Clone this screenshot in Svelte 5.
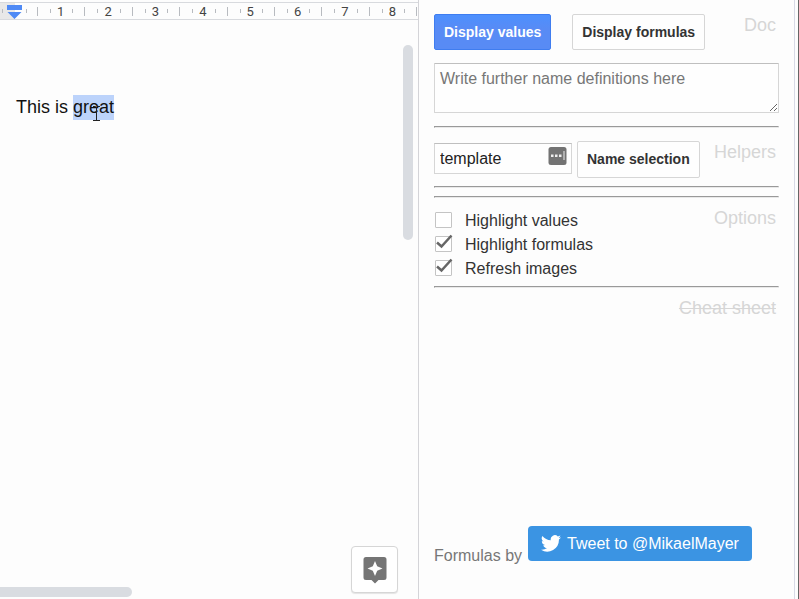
<script>
  const inches = [1, 2, 3, 4, 5, 6, 7, 8];
  let names = $state('');
  let selectionName = $state('template');
  let options = $state([
    { id: 'values', label: 'Highlight values', on: false },
    { id: 'formulas', label: 'Highlight formulas', on: true },
    { id: 'images', label: 'Refresh images', on: true }
  ]);
</script>

<div class="app">
  <main class="editor">
    <div class="ruler">
      <div class="margin"><i></i></div>
      <i class="quarter"></i>
      <div class="scale">
        {#each inches as inch}
          <div class="inch"><i></i><span>{inch}</span><i></i></div>
        {/each}
      </div>
      <svg class="indent" width="16" height="15" viewBox="0 0 16 15" aria-hidden="true">
        <path d="M0 0H15V5H0Z M0.500 7H14.500L7.500 14Z" fill="#4f8af5" />
      </svg>
    </div>

    <p class="text">This is <span class="selected">great<svg class="caret" width="7" height="16" viewBox="0 0 7 16" aria-hidden="true"><path d="M0 1.500H2.500L3.500 2.500L4.500 1.500H7M3.500 2V15M0 15.500H7" fill="none" stroke="#222" /></svg></span></p>

    <div class="bar vertical"></div>
    <div class="bar horizontal"></div>
    <button class="explore" aria-label="Explore">
      <svg width="24" height="27" viewBox="0 0 24 27">
        <path d="M3 0H21Q23.500 0 23.500 2.500V20.500Q23.500 23 21 23H15.500L12 26.500L8.500 23H3Q0.500 23 0.500 20.500V2.500Q0.500 0 3 0Z" fill="#757575" />
        <path d="M12 4L14.200 9.300L19.500 11.500L14.200 13.700L12 19L9.800 13.700L4.500 11.500L9.800 9.300Z" fill="#fff" />
      </svg>
    </button>
  </main>

  <aside class="sidebar">
    <div class="panel">
      <section class="row doc">
        <button class="btn primary">Display values</button>
        <button class="btn">Display formulas</button>
        <a class="heading" href="#doc">Doc</a>
      </section>
      <textarea bind:value={names} aria-label="Name definitions" placeholder="Write further name definitions here"></textarea>
      <hr />
      <section class="row helpers">
        <div class="field">
          <input type="text" aria-label="Name" bind:value={selectionName} />
          <svg width="19" height="18" viewBox="0 0 19 18" aria-hidden="true">
            <rect x="0.500" width="18" height="18" rx="2.500" fill="#737373" />
            <path d="M3 7.500H5.500V10H3ZM7 7.500H9.500V10H7ZM11 7.500H13.500V10H11ZM15.500 4H16.500V13H15.500Z" fill="#eee" />
          </svg>
        </div>
        <button class="btn">Name selection</button>
        <a class="heading" href="#helpers">Helpers</a>
      </section>
      <hr />
      <hr class="second" />
      <section class="row options">
        <div class="checks">
          {#each options as option}
            <div class="check">
              <input type="checkbox" id={option.id} bind:checked={option.on} />
              <label for={option.id}>{option.label}</label>
              {#if option.on}
                <svg width="18" height="17" viewBox="0 0 18 17" aria-hidden="true">
                  <path d="M2 8.500L6.500 12.500L16.500 1.500" fill="none" stroke="#666" stroke-width="2.500" />
                </svg>
              {/if}
            </div>
          {/each}
        </div>
        <a class="heading" href="#options">Options</a>
      </section>
      <hr />
      <section class="row cheat">
        <a class="heading off" href="#cheat">Cheat sheet</a>
      </section>
      <footer>
        <span>Formulas by</span>
        <a class="tweet" href="#tweet">
          <svg width="20" height="17" viewBox="0 0 24 20" aria-hidden="true">
            <path d="M24 2.400a10 10 0 0 1-2.800.8A5 5 0 0 0 23.300.500a10 10 0 0 1-3.100 1.200A4.900 4.900 0 0 0 11.800 6.200 14 14 0 0 1 1.700 1a4.900 4.900 0 0 0 1.500 6.600A5 5 0 0 1 1 7v.1a4.900 4.900 0 0 0 3.900 4.800 5 5 0 0 1-2.200.1 4.900 4.900 0 0 0 4.600 3.400A10 10 0 0 1 0 17.500a14 14 0 0 0 21.500-12.400A10 10 0 0 0 24 2.400Z" fill="#fff" />
          </svg>
          Tweet to @MikaelMayer
        </a>
      </footer>
    </div>
  </aside>
</div>

<style>
  :global(body) {
    margin: 0;
  }
  .app, .app * {
    box-sizing: border-box;
  }
  .app {
    display: flex;
    height: 100vh;
    overflow: hidden;
    background: #fdfdfd;
    border-right: 1px solid #666;
    font: 16px/20px "Liberation Sans", Arial, sans-serif;
  }
  .editor {
    position: relative;
    flex: 1;
    min-width: 0;
    overflow: hidden;
  }
  .ruler {
    position: relative;
    display: flex;
    align-items: center;
    height: 18px;
    margin-top: 2px;
    overflow: hidden;
    border: solid #d8dade;
    border-width: 1px 0;
  }
  .ruler i {
    flex: none;
    width: 1px;
    height: 4px;
    background: #b8bbc0;
  }
  .margin {
    display: flex;
    align-items: center;
    flex: none;
    width: 15px;
    height: 16px;
    padding-left: 2px;
    background: #e8e8e8;
  }
  .ruler .quarter {
    margin: 0 10px 0 11px;
  }
  .scale {
    display: flex;
    flex: none;
    width: 380px;
    border-right: 1px solid #b8bbc0;
  }
  .inch {
    display: flex;
    align-items: center;
    flex: 1;
    height: 9px;
    padding: 0 11px 0 12px;
    border-left: 1px solid #b8bbc0;
  }
  .inch span {
    flex: 1;
    padding: 2px 2px 0 0;
    text-align: center;
    font: 13px/16px Roboto, sans-serif;
    color: #444;
  }
  .indent {
    position: absolute;
    left: 7px;
    top: 2px;
  }
  .text {
    margin: 75px 16px 0;
    font-size: 18px;
    line-height: 25px;
    color: #111;
  }
  .selected {
    position: relative;
    display: inline-block;
    background: #bcd3fb;
  }
  .caret {
    position: absolute;
    left: 20px;
    top: 10px;
  }
  .bar {
    position: absolute;
    background: #d9dce1;
  }
  .vertical {
    right: 5px;
    top: 45px;
    width: 10px;
    height: 195px;
    border-radius: 5px;
  }
  .horizontal {
    left: 0;
    bottom: 2px;
    width: 132px;
    height: 10px;
    border-radius: 0 5px 5px 0;
  }
  .explore {
    position: absolute;
    right: 20px;
    bottom: 6px;
    display: flex;
    align-items: center;
    justify-content: center;
    width: 47px;
    height: 47px;
    padding: 2px 0 0;
    border: 1px solid #d6d6d6;
    border-radius: 4px;
    background: #fff;
    box-shadow: 0 1px 1px #e4e4e4;
  }
  .sidebar {
    display: flex;
    flex: none;
    width: 380px;
    padding-right: 3px;
    border-left: 1px solid #d4d4d8;
  }
  .panel {
    display: flex;
    flex-direction: column;
    flex: 1;
    padding: 14px 15px 0;
    border-right: 1px solid #d8dae6;
  }
  .row {
    display: flex;
  }
  .heading {
    margin-left: auto;
    padding-right: 3px;
    font-size: 18px;
    line-height: 22px;
    color: #d6d6d6;
    text-decoration: none;
  }
  .off {
    text-decoration: line-through;
  }
  .btn {
    height: 36px;
    padding: 0 9px;
    border: 1px solid #d6d6d6;
    border-radius: 2px;
    background: #fefefe;
    font: bold 14px/20px "Liberation Sans", Arial, sans-serif;
    color: #333;
    white-space: nowrap;
  }
  .primary {
    border-color: #3f7df0;
    background: linear-gradient(#4d90fe, #588bf5 40%);
    color: #fff;
  }
  .doc {
    gap: 21px;
  }
  textarea {
    display: block;
    width: 100%;
    height: 50px;
    margin: 13px 0;
    padding: 5px 5px 4px;
    border: 1px solid #d6d6d6;
    border-top-color: #bfbfbf;
    border-radius: 1px;
    background: #fefefe;
    font: 16px/20px "Liberation Sans", Arial, sans-serif;
    resize: vertical;
    overflow: hidden;
  }
  textarea::placeholder {
    color: #777;
  }
  hr {
    width: 100%;
    height: 2px;
    margin: 0;
    border: 1px solid #e9e9e9;
    border-top-color: #999;
    border-left-color: #999;
  }
  .second {
    margin-top: 8px;
  }
  .helpers {
    align-items: flex-start;
    gap: 5px;
    padding: 13px 0 8px;
  }
  .helpers .btn {
    height: 37px;
    padding-bottom: 2px;
  }
  .field {
    position: relative;
    width: 138px;
    margin-top: 2px;
  }
  .field input {
    display: block;
    width: 100%;
    height: 31px;
    padding: 0 28px 0 5px;
    border: 1px solid #d6d6d6;
    border-top-color: #bfbfbf;
    background: #fefefe;
    font: 16px/20px "Liberation Sans", Arial, sans-serif;
    color: #222;
  }
  .field svg {
    position: absolute;
    right: 5px;
    top: 4px;
  }
  .options {
    padding: 9px 0 5px;
  }
  .checks {
    display: flex;
    flex-direction: column;
    padding-top: 2px;
  }
  .check {
    position: relative;
    display: flex;
    align-items: center;
    height: 24px;
    color: #333;
  }
  .check input {
    appearance: none;
    width: 17px;
    height: 16px;
    margin: 0 13px 2px 1px;
    border: 1px solid #c4c4c4;
    border-radius: 1px;
    background: #fff;
  }
  .check svg {
    position: absolute;
    left: 1px;
    top: 1px;
    pointer-events: none;
  }
  .cheat {
    padding-top: 9px;
  }
  footer {
    display: flex;
    align-items: flex-end;
    gap: 6px;
    margin-top: auto;
    padding-bottom: 33px;
    color: #777;
    white-space: nowrap;
  }
  .tweet {
    display: flex;
    align-items: center;
    gap: 6px;
    height: 35px;
    margin-bottom: 5px;
    padding: 0 13px;
    border-radius: 4px;
    background: #3b94e3;
    color: #fff;
    text-decoration: none;
  }
</style>
